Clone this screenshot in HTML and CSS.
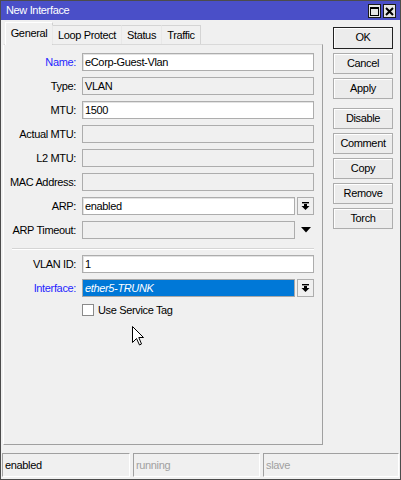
FILE: index.html
```html
<!DOCTYPE html>
<html>
<head>
<meta charset="utf-8">
<link rel="stylesheet" href="styles.css">
</head>
<body>
<div class="window">
  <div class="titlebar">
    <span class="title">New Interface</span>
    <div class="tbtns">
      <span class="tbtn"><svg width="9" height="9" viewBox="0 0 9 9"><rect x="0.5" y="0.5" width="8" height="8" fill="none" stroke="#000"/><rect x="0" y="0" width="9" height="2" fill="#000"/></svg></span>
      <span class="tbtn"><svg width="9" height="9" viewBox="0 0 9 9"><path d="M1 1 L8 8 M8 1 L1 8" stroke="#000" stroke-width="2"/></svg></span>
    </div>
  </div>
  <div class="main">
    <div class="left">
      <div class="tabs">
        <div class="tab active t1">General</div>
        <div class="tab t2">Loop Protect</div>
        <div class="tab t3">Status</div>
        <div class="tab t4">Traffic</div>
      </div>
      <div class="panel">
        <div class="row"><span class="label req">Name:</span><span class="field">eCorp-Guest-Vlan</span></div>
        <div class="row"><span class="label">Type:</span><span class="field ro">VLAN</span></div>
        <div class="row"><span class="label">MTU:</span><span class="field">1500</span></div>
        <div class="row"><span class="label">Actual MTU:</span><span class="field ro"></span></div>
        <div class="row"><span class="label">L2 MTU:</span><span class="field ro"></span></div>
        <div class="row"><span class="label">MAC Address:</span><span class="field ro"></span></div>
        <div class="row"><span class="label">ARP:</span><span class="field">enabled</span><span class="dd"><svg width="9" height="9" viewBox="0 0 9 9"><rect x="1" y="0" width="7" height="1.4" fill="#000"/><rect x="3" y="2" width="3" height="2" fill="#000"/><path d="M0.5 4 L8.5 4 L4.5 8 Z" fill="#000"/></svg></span></div>
        <div class="row"><span class="label">ARP Timeout:</span><span class="field ro"></span><span class="ddplain"><svg width="10" height="6" viewBox="0 0 10 6"><path d="M0 0 L10 0 L5 5.5 Z" fill="#000"/></svg></span></div>
        <div class="sep"></div>
        <div class="row"><span class="label">VLAN ID:</span><span class="field">1</span></div>
        <div class="row"><span class="label req">Interface:</span><span class="field sel">ether5-TRUNK</span><span class="dd"><svg width="9" height="9" viewBox="0 0 9 9"><rect x="1" y="0" width="7" height="1.4" fill="#000"/><rect x="3" y="2" width="3" height="2" fill="#000"/><path d="M0.5 4 L8.5 4 L4.5 8 Z" fill="#000"/></svg></span></div>
        <div class="checkrow"><span class="check"></span><span class="checklabel">Use Service Tag</span></div>
      </div>
    </div>
    <div class="buttons">
      <div class="btn default">OK</div>
      <div class="btn">Cancel</div>
      <div class="btn">Apply</div>
      <div class="btn gapped">Disable</div>
      <div class="btn">Comment</div>
      <div class="btn">Copy</div>
      <div class="btn">Remove</div>
      <div class="btn">Torch</div>
    </div>
  </div>
  <div class="statusbar">
    <div class="sfield s1">enabled</div>
    <div class="sfield s2 dim">running</div>
    <div class="sfield s3 dim">slave</div>
  </div>
  <svg class="cursor" width="13" height="20" viewBox="0 0 13 20"><path d="M0.5 0.5 L0.5 16.5 L4.5 12.5 L7.5 19 L9.5 18 L6.8 11.5 L11.5 11.5 Z" fill="#fff" stroke="#000" stroke-width="1" stroke-linejoin="miter"/></svg>
</div>
</body>
</html>
```

FILE: styles.css
```css
* { box-sizing: border-box; }
html, body { margin: 0; padding: 0; background: #f0f0f0; }
body {
  font-family: "Liberation Sans", Arial, sans-serif;
  font-size: 10.5px;
  letter-spacing: -0.35px;
  color: #000;
}
.window {
  position: relative;
  width: 401px;
  height: 480px;
  border: 1px solid #4c4c4c;
  background: #f0f0f0;
  display: flex;
  flex-direction: column;
}
.titlebar {
  height: 19px;
  flex: none;
  background: #4a4fc8;
  display: flex;
  align-items: center;
  padding: 0 4px 0 5px;
}
.title { color: #fff; line-height: 19px; font-size: 11px; }
.tbtns { margin-left: auto; display: flex; gap: 2px; margin-top: 1px; }
.tbtn {
  width: 13px;
  height: 14px;
  background: #e6e6e6;
  border: 1px solid #1a1a1a;
  display: flex;
  align-items: center;
  justify-content: center;
}
.main { flex: 1; display: flex; min-height: 0; }
.left { margin-left: 2px; margin-top: 2px; width: 320px; display: flex; flex-direction: column; }
.tabs { height: 22px; display: flex; align-items: flex-end; padding-left: 2px; position: relative; z-index: 1; }
.tab {
  flex: none;
  height: 19px;
  border: 1px solid #d4d4d4;
  border-bottom: none;
  border-left-color: #e8e8e8;
  background: #f0f0f0;
  text-align: center;
  line-height: 18px;
  margin-left: -1px;
  white-space: nowrap;
  font-size: 11px;
}
.tab.active { height: 23px; margin-bottom: -1px; line-height: 21px; background: #f0f0f0; margin-left: 0; border-color: #d0d0d0; border-left-color: #fff; border-top-color: #fff; }
.t1 { width: 48px; }
.t2 { width: 70px; }
.t3 { width: 41px; }
.t4 { width: 40px; }
.panel {
  height: 401px;
  border: 1px solid #fff;
  border-right-color: #a0a0a0;
  border-bottom-color: #a0a0a0;
  border-top-color: #d9d9d9;
  padding: 8px 8px 0 0;
  display: flex;
  flex-direction: column;
}
.row { display: flex; align-items: center; height: 18px; margin-bottom: 6px; }
.label { width: 72px; margin-right: 6px; text-align: right; white-space: nowrap; font-size: 11px; }
.label.req { color: #1f1fff; }
.field {
  flex: 1;
  height: 18px;
  background: #fff;
  border: 1px solid #adadad;
  box-shadow: inset 1px 1px 0 #e3e3e3;
  padding-left: 2px;
  line-height: 16px;
  white-space: nowrap;
  font-size: 11px;
}
.field.ro { background: #f0f0f0; box-shadow: none; }
.field.sel { background: #0078d7; color: #fff; font-style: italic; border-color: #a8a8a8; box-shadow: none; }
.dd {
  width: 17px;
  height: 18px;
  margin-left: 2px;
  border: 1px solid #adadad;
  background: #f0f0f0;
  display: flex;
  align-items: center;
  justify-content: center;
}
.ddplain { width: 17px; height: 18px; margin-left: 2px; display: flex; align-items: center; justify-content: center; }
.sep { height: 2px; margin: 3px 0 5px 8px; border-top: 1px solid #d5d5d5; border-bottom: 1px solid #fff; }
.checkrow { display: flex; align-items: center; height: 14px; margin-left: 78px; }
.check { width: 12px; height: 12px; background: #fff; border: 1px solid #8a8a8a; }
.checklabel { margin-left: 4px; font-size: 11px; }
.buttons { margin-left: 10px; margin-top: 7px; width: 60px; display: flex; flex-direction: column; gap: 4px; }
.btn {
  height: 21px;
  border: 1px solid #adadad;
  box-shadow: inset 1px 1px 0 #fff;
  background: #ececec;
  text-align: center;
  line-height: 19px;
  font-size: 11px;
}
.btn.default { height: 22px; border-color: #222; }
.btn.gapped { margin-top: 5px; }
.statusbar { height: 24px; flex: none; margin: 0 1px 2px 1px; display: flex; gap: 3px; }
.sfield {
  height: 24px;
  border: 1px solid #a0a0a0;
  border-right-color: #fff;
  border-bottom-color: #fff;
  padding-left: 2px;
  line-height: 22px;
  font-size: 11px;
}
.s1 { width: 128px; }
.s2 { width: 127px; }
.s3 { flex: 1; }
.dim { color: #a0a0a0; }
.cursor { position: absolute; left: 131px; top: 325px; }
```
